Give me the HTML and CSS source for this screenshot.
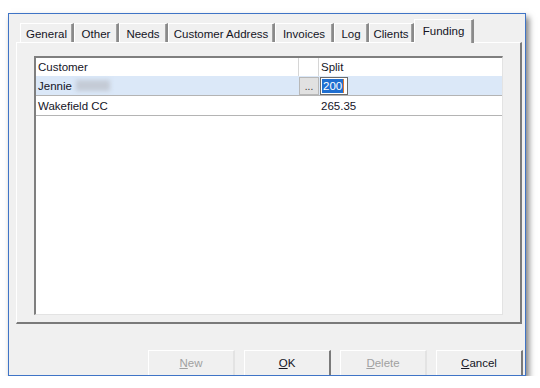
FILE: index.html
```html
<!DOCTYPE html>
<html lang="en">
<head>
  <meta charset="UTF-8">
  <title>Funding</title>
  <link rel="stylesheet" href="styles.css">
</head>
<body>
  <div class="window">
    <div class="tabs-area">
      <div class="tabstrip">
        <div class="tab tab-general">General</div>
        <div class="tab tab-other">Other</div>
        <div class="tab tab-needs">Needs</div>
        <div class="tab tab-address">Customer Address</div>
        <div class="tab tab-invoices">Invoices</div>
        <div class="tab tab-log">Log</div>
        <div class="tab tab-clients">Clients</div>
        <div class="tab tab-funding active">Funding</div>
      </div>
      <div class="panel">
        <div class="list">
          <div class="row header">
            <div class="cell name">Customer</div>
            <div class="cell pick"></div>
            <div class="cell split">Split</div>
          </div>
          <div class="row selected">
            <div class="cell name">Jennie <span class="blurred"></span></div>
            <div class="cell pick"><span class="dots">...</span></div>
            <div class="cell split"><span class="edit"><span class="sel">200</span><span class="caret"></span></span></div>
          </div>
          <div class="row">
            <div class="cell name">Wakefield CC</div>
            <div class="cell pick"></div>
            <div class="cell split">265.35</div>
          </div>
        </div>
      </div>
    </div>
    <div class="buttons">
      <div class="button disabled"><u>N</u>ew</div>
      <div class="button"><u>O</u>K</div>
      <div class="button disabled"><u>D</u>elete</div>
      <div class="button"><u>C</u>ancel</div>
    </div>
  </div>
</body>
</html>
```

FILE: styles.css
```css
body {
  margin: 0;
  background-color: #ffffff;
  font-family: 'Liberation Sans', Arial, sans-serif;
  font-size: 11.5px;
  color: #14141f;
}

.window {
  box-sizing: border-box;
  width: 518px;
  height: 363px;
  margin: 13px 0 0 8px;
  background-color: #f0f0f0;
  border: 1px solid #3f74c6;
  box-shadow: 3px 4px 6px rgba(0, 0, 0, 0.5);
  overflow: hidden;
}

.tabs-area {
  padding: 5px 0 0 7px;
}

.tabstrip {
  display: flex;
  align-items: flex-end;
  height: 23px;
  padding-left: 4px;
  position: relative;
  z-index: 1;
}

.tab {
  box-sizing: border-box;
  height: 19px;
  line-height: 20px;
  text-align: center;
  background-color: #f0f0f0;
  border-top: 1px solid #ffffff;
  border-left: 1px solid #ffffff;
  border-right: 2px solid #8a8a8a;
  box-shadow: inset -1px 0 0 #a0a0a0;
}

.tab-general { width: 54px; }
.tab-other { width: 45px; }
.tab-needs { width: 49px; }
.tab-address { width: 107px; }
.tab-invoices { width: 59px; }
.tab-log { width: 35px; }
.tab-clients { width: 45px; }
.tab-funding { width: 60px; }

.tab.active {
  height: 24px;
  line-height: 23px;
  margin-bottom: -1px;
}

.panel {
  box-sizing: border-box;
  width: 506px;
  height: 282px;
  padding: 13px 0 0 17px;
  border-top: 1px solid #ffffff;
  border-left: 1px solid #ffffff;
  border-right: 2px solid #7a7a7a;
  border-bottom: 2px solid #7a7a7a;
}

.list {
  box-sizing: border-box;
  width: 469px;
  height: 259px;
  background-color: #ffffff;
  border-top: 2px solid #7f7f7f;
  border-left: 2px solid #7f7f7f;
  border-right: 1px solid #e3e3e3;
  border-bottom: 1px solid #e3e3e3;
}

.row {
  display: flex;
  height: 20px;
  box-sizing: border-box;
  border-bottom: 1px solid #b4b4b4;
}

.row.header {
  height: 18px;
  border-bottom: none;
}

.row.selected {
  background-color: #dbe8f8;
}

.cell {
  display: flex;
  align-items: center;
  box-sizing: border-box;
}

.name {
  width: 262px;
  padding-left: 2px;
}

.pick {
  width: 21px;
}

.split {
  padding-left: 2px;
}

.header .pick {
  border-left: 1px solid #d6d6d6;
  border-right: 1px solid #d6d6d6;
  height: 18px;
}

.blurred {
  display: inline-block;
  width: 34px;
  height: 11px;
  margin-left: 4px;
  background-color: #c4cbd6;
  filter: blur(2px);
}

.dots {
  box-sizing: border-box;
  width: 20px;
  height: 18px;
  margin-left: 1px;
  background-color: #e1e1e1;
  border: 1px solid #b8b8b8;
  font-size: 10px;
  text-align: center;
  line-height: 18px;
  color: #333333;
}

.edit {
  display: flex;
  align-items: center;
  box-sizing: border-box;
  width: 28px;
  height: 18px;
  margin-left: -1px;
  padding-left: 1px;
  background-color: #ffffff;
  border: 1px solid #6b6b6b;
}

.sel {
  background-color: #1f6fd1;
  color: #ffffff;
  line-height: 14px;
  padding: 0 1px;
}

.caret {
  width: 1px;
  height: 14px;
  background-color: #e07a2e;
}

.buttons {
  display: flex;
  justify-content: flex-end;
  gap: 9px;
  margin-top: 26px;
  padding-right: 2px;
}

.button {
  box-sizing: border-box;
  width: 87px;
  height: 27px;
  line-height: 25px;
  text-align: center;
  background-color: #f0f0f0;
  border-top: 1px solid #ffffff;
  border-left: 1px solid #ffffff;
  border-right: 2px solid #7a7a7a;
}

.button.disabled {
  color: #a0a0a0;
  border-right-color: #e3e3e3;
}
```
